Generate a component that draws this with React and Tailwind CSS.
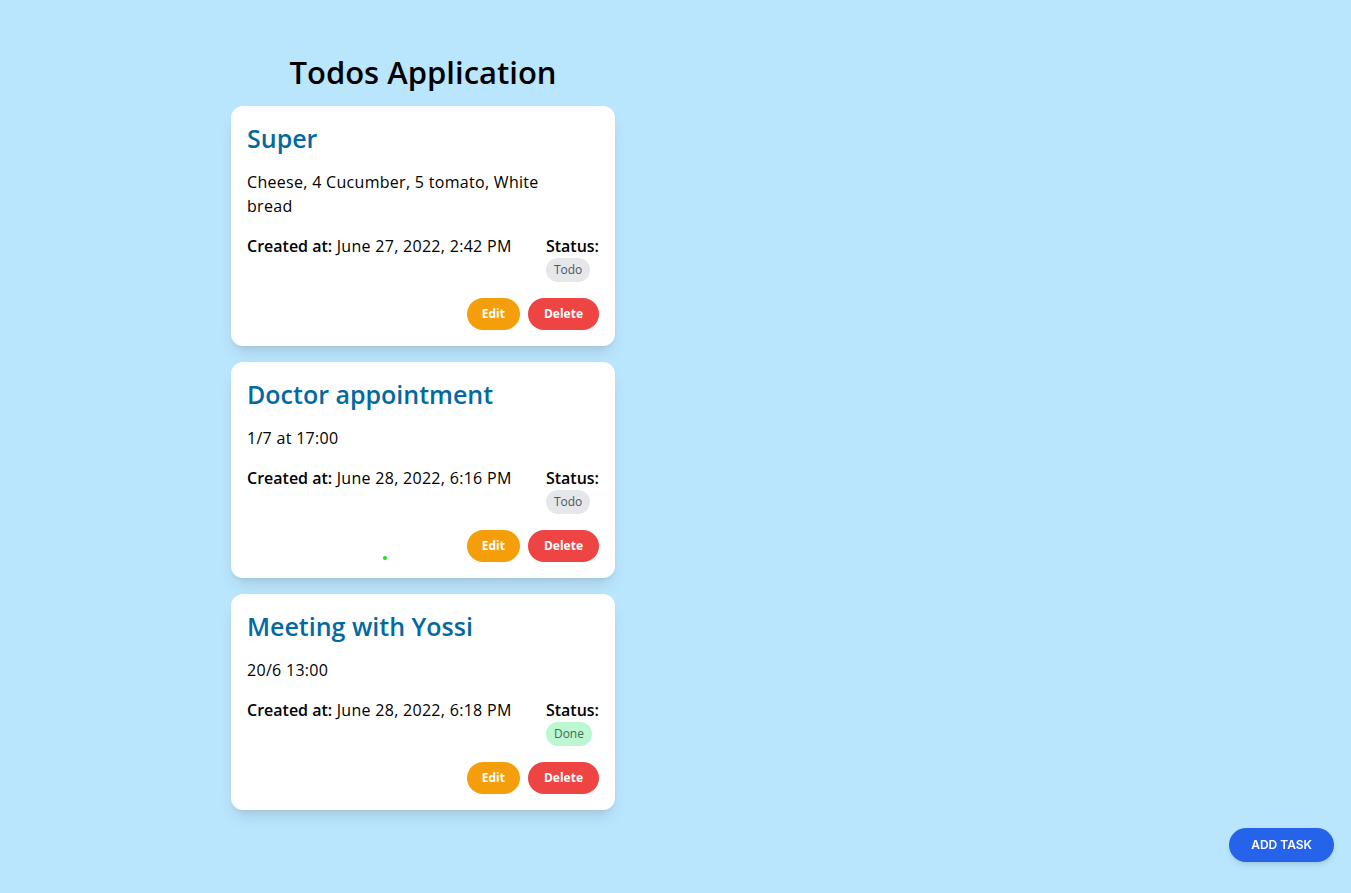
import React from 'react';

const todos = [
  {
    id: 1,
    title: 'Super',
    description: 'Cheese, 4 Cucumber, 5 tomato, White bread',
    createdAt: 'June 27, 2022, 2:42 PM',
    status: 'Todo',
  },
  {
    id: 2,
    title: 'Doctor appointment',
    description: '1/7 at 17:00',
    createdAt: 'June 28, 2022, 6:16 PM',
    status: 'Todo',
  },
  {
    id: 3,
    title: 'Meeting with Yossi',
    description: '20/6 13:00',
    createdAt: 'June 28, 2022, 6:18 PM',
    status: 'Done',
  },
];

function TodoCard({ todo, dot }) {
  return (
    <div className="relative bg-white rounded-xl shadow-lg p-4">
      <h2 className="text-[25px] leading-8 font-semibold text-[#0369a1] mb-4">{todo.title}</h2>
      <p className="text-base text-black tracking-[0.3px] pr-6">{todo.description}</p>
      <div className="flex justify-between items-start mt-4">
        <p className="text-base text-black tracking-[0.3px]">
          <span className="font-semibold tracking-normal">Created at:</span> {todo.createdAt}
        </p>
        <div className="flex flex-col items-start">
          <span className="text-base font-semibold text-black">Status:</span>
          {todo.status === 'Done' ? (
            <span className="text-xs px-2 py-1 rounded-full bg-[#bbf7d0] text-[#3f6f52]">Done</span>
          ) : (
            <span className="text-xs px-2 py-1 rounded-full bg-[#e5e7eb] text-[#4b5563]">Todo</span>
          )}
        </div>
      </div>
      <div className="flex justify-end gap-2 mt-4">
        <button className="bg-[#f59e0b] text-white text-xs font-bold px-[15px] py-2 rounded-full">Edit</button>
        <button className="bg-[#ef4444] text-white text-xs font-bold px-4 py-2 rounded-full">Delete</button>
      </div>
      {dot && <span className="absolute left-[152px] top-[194px] w-1 h-1 rounded-full bg-[#22dd22]" />}
    </div>
  );
}

export default function App() {
  return (
    <div className="min-h-screen bg-[#bae6fd] font-['Open_Sans',sans-serif]">
      <div className="ml-[231px] w-96 pt-[54px] pb-10">
        <h1 className="text-[31px] leading-9 font-semibold text-black text-center mb-4">Todos Application</h1>
        <div className="flex flex-col gap-4">
          {todos.map((todo) => (
            <TodoCard key={todo.id} todo={todo} dot={todo.id === 2} />
          ))}
        </div>
      </div>
      <button className="fixed right-[17px] bottom-[31px] bg-[#2563eb] text-white text-xs font-semibold px-[22px] py-[9px] rounded-full shadow-md font-['Inter',sans-serif]">
        ADD TASK
      </button>
    </div>
  );
}
